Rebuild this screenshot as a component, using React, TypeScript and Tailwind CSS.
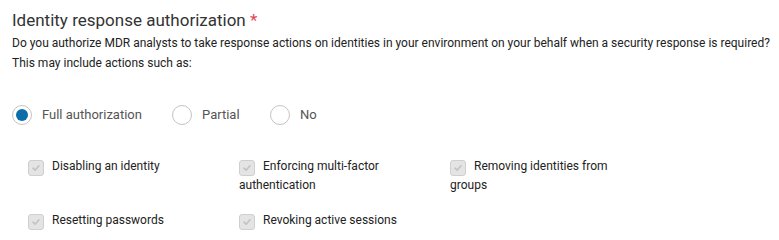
const actions = [
  "Disabling an identity",
  "Enforcing multi-factor authentication",
  "Removing identities from groups",
  "Resetting passwords",
  "Revoking active sessions",
];

const options = [
  { label: "Full authorization", checked: true, width: "w-[160px]" },
  { label: "Partial", checked: false, width: "w-[98px]" },
  { label: "No", checked: false, width: "w-auto" },
];

const Radio = ({ checked }: { checked: boolean }) => (
  <span className="flex h-[20px] w-[20px] shrink-0 items-center justify-center rounded-full border border-[#c4c4c4] bg-white">
    {checked && <span className="h-[12px] w-[12px] rounded-full bg-[#0b6eaa]" />}
  </span>
);

const DisabledCheck = () => (
  <span className="mr-[8px] inline-flex h-[16px] w-[16px] shrink-0 items-center justify-center rounded-[3px] border border-[#cfcfcf] bg-[#e4e4e4] align-[-3px]">
    <svg width="10" height="10" viewBox="0 0 10 10" fill="none">
      <path
        d="M2 5.2 L4.1 7.2 L8 2.8"
        stroke="#c2c2c2"
        strokeWidth="1.6"
        strokeLinecap="round"
        strokeLinejoin="round"
      />
    </svg>
  </span>
);

export default function App() {
  return (
    <div className="h-[240px] w-[779px] bg-white pl-[12px] pt-[8px] font-['Roboto',sans-serif] text-[#333]">
      <h3 className="text-[17px] leading-[24px] text-[#333]">
        Identity response authorization <span className="text-[#e0455a]">*</span>
      </h3>
      <p className="mt-[1px] text-[12px] leading-[20px] text-[#222]">
        Do you authorize MDR analysts to take response actions on identities in your environment on your behalf when a
        security response is required?
        <br />
        This may include actions such as:
      </p>
      <div className="mt-[32px] flex items-center">
        {options.map((opt) => (
          <label key={opt.label} className={`flex items-center gap-[10px] ${opt.width}`}>
            <Radio checked={opt.checked} />
            <span className="text-[13px] text-[#555]">{opt.label}</span>
          </label>
        ))}
      </div>
      <div className="mt-[32px] grid grid-cols-[211px_211px_211px] gap-y-[17px] pl-[16px]">
        {actions.map((a) => (
          <div key={a} className="pr-[30px] text-[12px] leading-[18px] text-[#222]">
            <DisabledCheck />
            {a}
          </div>
        ))}
      </div>
    </div>
  );
}
